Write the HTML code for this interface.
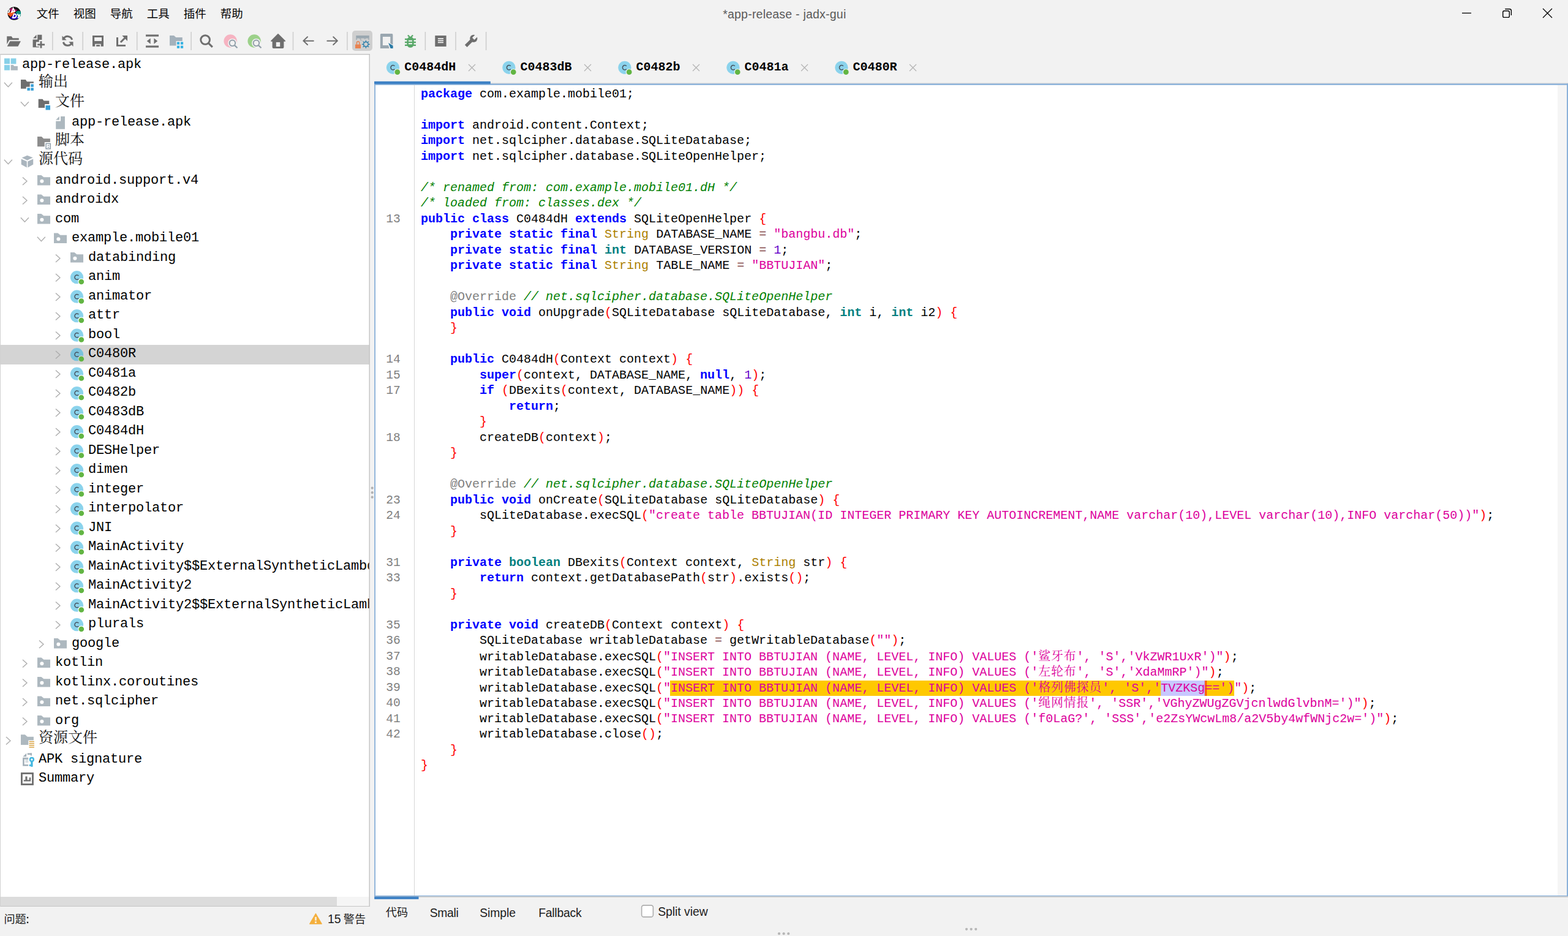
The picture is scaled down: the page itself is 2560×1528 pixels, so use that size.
<!DOCTYPE html>
<html><head><meta charset="utf-8"><title>jadx-gui</title><style>
html,body{margin:0;padding:0}
body{width:2560px;height:1528px;overflow:hidden;background:#f2f2f2;position:relative;font-family:"Liberation Sans",sans-serif}
.abs{position:absolute;white-space:pre}
.ui{font-family:"Liberation Sans",sans-serif}
.tr{font-family:"Liberation Mono",monospace;font-size:22px;line-height:31.5px;height:31.5px;color:#000;letter-spacing:-0.2px}
.tab{font-family:"Liberation Mono",monospace;font-weight:bold;font-size:20px;line-height:30px;color:#000}
.cl{font-family:"Liberation Mono",monospace;font-size:20px;line-height:25.5px;height:25.5px;color:#000}
.ln{font-family:"Liberation Mono",monospace;font-size:19.6px;line-height:25.5px;height:25.5px;color:#808080;text-align:right}
.kw{color:#0000ff}.dt{color:#008080}.fn{color:#ad8000}.nu{color:#6400c8}.sp{color:#ff0000}.op{color:#804040}.st{color:#dc009c}.an{color:#808080}
.cm{color:#008000;font-style:italic}
.bt{top:1480px;font-size:19.3px;color:#1c1c1c;line-height:22px}
.mn{font-family:"Liberation Sans","Noto Sans CJK SC",sans-serif;font-size:18.45px;line-height:18.6px;height:18.6px;color:#000}
.sb{font-family:"Liberation Sans","Noto Sans CJK SC",sans-serif;font-size:18.1px;line-height:18.6px;height:18.6px;color:#1c1c1c}
.tc{font-family:"Liberation Serif","Noto Serif CJK SC",serif;font-size:24px;line-height:24px;height:24px;color:#111}
.cj{font-family:"Liberation Serif","Noto Serif CJK SC",serif;font-size:19.9px;letter-spacing:0.9px;color:#dc009c}
#ov{position:absolute;left:0;top:0;pointer-events:none}
</style></head><body>
<div class="abs mn" style="left:59.8px;top:13.9px">文件</div>
<div class="abs mn" style="left:119.8px;top:13.9px">视图</div>
<div class="abs mn" style="left:179.8px;top:13.9px">导航</div>
<div class="abs mn" style="left:239.8px;top:13.9px">工具</div>
<div class="abs mn" style="left:299.8px;top:13.9px">插件</div>
<div class="abs mn" style="left:359.8px;top:13.9px">帮助</div>
<div class="abs ui" id="title" style="left:1180.2px;top:12px;font-size:19.4px;letter-spacing:0.27px;color:#5a5a5a;white-space:pre">*app-release - jadx-gui</div>
<div class="abs" style="left:0;top:88.5px;width:603.5px;height:1391.2px;background:#fff"></div>
<div class="abs" style="left:1px;top:563.00px;width:602px;height:32.00px;background:#d4d4d4"></div>
<div class="abs" style="left:1px;top:89px;width:602px;height:1374px;overflow:hidden"><div style="position:absolute;left:-1px;top:-89px"><div class="abs tr" style="left:35.90px;top:89.70px">app-release.apk</div><div class="abs tc" style="left:63.00px;top:121.40px">输出</div><div class="abs tc" style="left:90.00px;top:153.40px">文件</div><div class="abs tr" style="left:116.90px;top:183.70px">app-release.apk</div><div class="abs tc" style="left:90.00px;top:216.40px">脚本</div><div class="abs tc" style="left:63.00px;top:247.40px">源代码</div><div class="abs tr" style="left:89.90px;top:278.70px">android.support.v4</div><div class="abs tr" style="left:89.90px;top:309.70px">androidx</div><div class="abs tr" style="left:89.90px;top:341.70px">com</div><div class="abs tr" style="left:116.90px;top:372.70px">example.mobile01</div><div class="abs tr" style="left:143.90px;top:404.70px">databinding</div><div class="abs tr" style="left:143.90px;top:435.70px">anim</div><div class="abs tr" style="left:143.90px;top:467.70px">animator</div><div class="abs tr" style="left:143.90px;top:498.70px">attr</div><div class="abs tr" style="left:143.90px;top:530.70px">bool</div><div class="abs tr" style="left:143.90px;top:561.70px">C0480R</div><div class="abs tr" style="left:143.90px;top:593.70px">C0481a</div><div class="abs tr" style="left:143.90px;top:624.70px">C0482b</div><div class="abs tr" style="left:143.90px;top:656.70px">C0483dB</div><div class="abs tr" style="left:143.90px;top:687.70px">C0484dH</div><div class="abs tr" style="left:143.90px;top:719.70px">DESHelper</div><div class="abs tr" style="left:143.90px;top:750.70px">dimen</div><div class="abs tr" style="left:143.90px;top:782.70px">integer</div><div class="abs tr" style="left:143.90px;top:813.70px">interpolator</div><div class="abs tr" style="left:143.90px;top:845.70px">JNI</div><div class="abs tr" style="left:143.90px;top:876.70px">MainActivity</div><div class="abs tr" style="left:143.90px;top:908.70px">MainActivity$$ExternalSyntheticLambda0</div><div class="abs tr" style="left:143.90px;top:939.70px">MainActivity2</div><div class="abs tr" style="left:143.90px;top:971.70px">MainActivity2$$ExternalSyntheticLambda0</div><div class="abs tr" style="left:143.90px;top:1002.70px">plurals</div><div class="abs tr" style="left:116.90px;top:1034.70px">google</div><div class="abs tr" style="left:89.90px;top:1065.70px">kotlin</div><div class="abs tr" style="left:89.90px;top:1097.70px">kotlinx.coroutines</div><div class="abs tr" style="left:89.90px;top:1128.70px">net.sqlcipher</div><div class="abs tr" style="left:89.90px;top:1160.70px">org</div><div class="abs tc" style="left:63.00px;top:1192.40px">资源文件</div><div class="abs tr" style="left:62.90px;top:1223.70px">APK signature</div><div class="abs tr" style="left:62.90px;top:1254.70px">Summary</div></div></div>
<div class="abs" style="left:1px;top:1463.5px;width:601.6px;height:15.6px;background:#f5f5f5"></div>
<div class="abs" style="left:1px;top:1463.5px;width:549px;height:15.6px;background:#dcdcdc"></div>
<div class="abs sb" style="left:6.4px;top:1491.9px">问题</div>
<div class="abs ui" id="w15" style="left:535px;top:1489.2px;font-size:19.5px;color:#1c1c1c">15</div>
<div class="abs sb" style="left:560.8px;top:1491.9px">警告</div>
<div class="abs tab" style="left:660.20px;top:95px">C0484dH</div>
<div class="abs tab" style="left:849.60px;top:95px">C0483dB</div>
<div class="abs tab" style="left:1038.60px;top:95px">C0482b</div>
<div class="abs tab" style="left:1215.60px;top:95px">C0481a</div>
<div class="abs tab" style="left:1392.60px;top:95px">C0480R</div>
<div class="abs" style="left:611.7px;top:137.0px;width:1948.3px;height:1325.8px;background:#fff"></div>
<div class="abs" style="left:2543px;top:138.8px;width:15.1px;height:1322.8px;background:#f5f5f5"></div>
<div class="abs" style="left:676.1px;top:138.8px;width:1px;height:1323.1px;background:#d6d6d6"></div>
<div class="abs" style="left:1094.0px;top:1111.0px;width:921.0px;height:25.0px;background:#ffc800"></div>
<div class="abs" style="left:1895.0px;top:1111.0px;width:72.0px;height:25.0px;background:#c8c8ff"></div>
<div class="abs ln" style="left:612px;top:346.00px;width:41.8px">13</div>
<div class="abs ln" style="left:612px;top:575.00px;width:41.8px">14</div>
<div class="abs ln" style="left:612px;top:601.00px;width:41.8px">15</div>
<div class="abs ln" style="left:612px;top:626.00px;width:41.8px">17</div>
<div class="abs ln" style="left:612px;top:703.00px;width:41.8px">18</div>
<div class="abs ln" style="left:612px;top:805.00px;width:41.8px">23</div>
<div class="abs ln" style="left:612px;top:830.00px;width:41.8px">24</div>
<div class="abs ln" style="left:612px;top:907.00px;width:41.8px">31</div>
<div class="abs ln" style="left:612px;top:932.00px;width:41.8px">33</div>
<div class="abs ln" style="left:612px;top:1009.00px;width:41.8px">35</div>
<div class="abs ln" style="left:612px;top:1034.00px;width:41.8px">36</div>
<div class="abs ln" style="left:612px;top:1060.00px;width:41.8px">37</div>
<div class="abs ln" style="left:612px;top:1085.00px;width:41.8px">38</div>
<div class="abs ln" style="left:612px;top:1111.00px;width:41.8px">39</div>
<div class="abs ln" style="left:612px;top:1136.00px;width:41.8px">40</div>
<div class="abs ln" style="left:612px;top:1162.00px;width:41.8px">41</div>
<div class="abs ln" style="left:612px;top:1187.00px;width:41.8px">42</div>
<div class="abs cl" style="left:687.0px;top:141.00px"><b class="kw">package</b> com.example.mobile01;</div>
<div class="abs cl" style="left:687.0px;top:192.00px"><b class="kw">import</b> android.content.Context;</div>
<div class="abs cl" style="left:687.0px;top:217.00px"><b class="kw">import</b> net.sqlcipher.database.SQLiteDatabase;</div>
<div class="abs cl" style="left:687.0px;top:243.00px"><b class="kw">import</b> net.sqlcipher.database.SQLiteOpenHelper;</div>
<div class="abs cl" style="left:687.0px;top:294.00px"><i class="cm">/* renamed from: com.example.mobile01.dH */</i></div>
<div class="abs cl" style="left:687.0px;top:319.00px"><i class="cm">/* loaded from: classes.dex */</i></div>
<div class="abs cl" style="left:687.0px;top:345.00px"><b class="kw">public</b> <b class="kw">class</b> C0484dH <b class="kw">extends</b> SQLiteOpenHelper <span class="sp">{</span></div>
<div class="abs cl" style="left:687.0px;top:370.00px">    <b class="kw">private</b> <b class="kw">static</b> <b class="kw">final</b> <span class="fn">String</span> DATABASE_NAME <span class="op">=</span> <span class="st">"bangbu.db"</span>;</div>
<div class="abs cl" style="left:687.0px;top:396.00px">    <b class="kw">private</b> <b class="kw">static</b> <b class="kw">final</b> <b class="dt">int</b> DATABASE_VERSION <span class="op">=</span> <span class="nu">1</span>;</div>
<div class="abs cl" style="left:687.0px;top:421.00px">    <b class="kw">private</b> <b class="kw">static</b> <b class="kw">final</b> <span class="fn">String</span> TABLE_NAME <span class="op">=</span> <span class="st">"BBTUJIAN"</span>;</div>
<div class="abs cl" style="left:687.0px;top:472.00px">    <span class="an">@Override</span> <i class="cm">// net.sqlcipher.database.SQLiteOpenHelper</i></div>
<div class="abs cl" style="left:687.0px;top:498.00px">    <b class="kw">public</b> <b class="kw">void</b> onUpgrade<span class="sp">(</span>SQLiteDatabase sQLiteDatabase, <b class="dt">int</b> i, <b class="dt">int</b> i2<span class="sp">)</span> <span class="sp">{</span></div>
<div class="abs cl" style="left:687.0px;top:523.00px">    <span class="sp">}</span></div>
<div class="abs cl" style="left:687.0px;top:574.00px">    <b class="kw">public</b> C0484dH<span class="sp">(</span>Context context<span class="sp">)</span> <span class="sp">{</span></div>
<div class="abs cl" style="left:687.0px;top:600.00px">        <b class="kw">super</b><span class="sp">(</span>context, DATABASE_NAME, <b class="kw">null</b>, <span class="nu">1</span><span class="sp">)</span>;</div>
<div class="abs cl" style="left:687.0px;top:625.00px">        <b class="kw">if</b> <span class="sp">(</span>DBexits<span class="sp">(</span>context, DATABASE_NAME<span class="sp">)</span><span class="sp">)</span> <span class="sp">{</span></div>
<div class="abs cl" style="left:687.0px;top:651.00px">            <b class="kw">return</b>;</div>
<div class="abs cl" style="left:687.0px;top:676.00px">        <span class="sp">}</span></div>
<div class="abs cl" style="left:687.0px;top:702.00px">        createDB<span class="sp">(</span>context<span class="sp">)</span>;</div>
<div class="abs cl" style="left:687.0px;top:727.00px">    <span class="sp">}</span></div>
<div class="abs cl" style="left:687.0px;top:778.00px">    <span class="an">@Override</span> <i class="cm">// net.sqlcipher.database.SQLiteOpenHelper</i></div>
<div class="abs cl" style="left:687.0px;top:804.00px">    <b class="kw">public</b> <b class="kw">void</b> onCreate<span class="sp">(</span>SQLiteDatabase sQLiteDatabase<span class="sp">)</span> <span class="sp">{</span></div>
<div class="abs cl" style="left:687.0px;top:829.00px">        sQLiteDatabase.execSQL<span class="sp">(</span><span class="st">"create table BBTUJIAN(ID INTEGER PRIMARY KEY AUTOINCREMENT,NAME varchar(10),LEVEL varchar(10),INFO varchar(50))"</span><span class="sp">)</span>;</div>
<div class="abs cl" style="left:687.0px;top:855.00px">    <span class="sp">}</span></div>
<div class="abs cl" style="left:687.0px;top:906.00px">    <b class="kw">private</b> <b class="dt">boolean</b> DBexits<span class="sp">(</span>Context context, <span class="fn">String</span> str<span class="sp">)</span> <span class="sp">{</span></div>
<div class="abs cl" style="left:687.0px;top:931.00px">        <b class="kw">return</b> context.getDatabasePath<span class="sp">(</span>str<span class="sp">)</span>.exists<span class="sp">(</span><span class="sp">)</span>;</div>
<div class="abs cl" style="left:687.0px;top:957.00px">    <span class="sp">}</span></div>
<div class="abs cl" style="left:687.0px;top:1008.00px">    <b class="kw">private</b> <b class="kw">void</b> createDB<span class="sp">(</span>Context context<span class="sp">)</span> <span class="sp">{</span></div>
<div class="abs cl" style="left:687.0px;top:1033.00px">        SQLiteDatabase writableDatabase <span class="op">=</span> getWritableDatabase<span class="sp">(</span><span class="st">""</span><span class="sp">)</span>;</div>
<div class="abs cl" style="left:687.0px;top:1059.00px">        writableDatabase.execSQL<span class="sp">(</span><span class="st">"INSERT INTO BBTUJIAN (NAME, LEVEL, INFO) VALUES ('<span class="cj">鲨牙布</span>', 'S','VkZWR1UxR')"</span><span class="sp">)</span>;</div>
<div class="abs cl" style="left:687.0px;top:1084.00px">        writableDatabase.execSQL<span class="sp">(</span><span class="st">"INSERT INTO BBTUJIAN (NAME, LEVEL, INFO) VALUES ('<span class="cj">左轮布</span>', 'S','XdaMmRP')"</span><span class="sp">)</span>;</div>
<div class="abs cl" style="left:687.0px;top:1110.00px">        writableDatabase.execSQL<span class="sp">(</span><span class="st">"INSERT INTO BBTUJIAN (NAME, LEVEL, INFO) VALUES ('<span class="cj">格列佛探员</span>', 'S','TVZKSg==')"</span><span class="sp">)</span>;</div>
<div class="abs cl" style="left:687.0px;top:1135.00px">        writableDatabase.execSQL<span class="sp">(</span><span class="st">"INSERT INTO BBTUJIAN (NAME, LEVEL, INFO) VALUES ('<span class="cj">绳网情报</span>', 'SSR','VGhyZWUgZGVjcnlwdGlvbnM=')"</span><span class="sp">)</span>;</div>
<div class="abs cl" style="left:687.0px;top:1161.00px">        writableDatabase.execSQL<span class="sp">(</span><span class="st">"INSERT INTO BBTUJIAN (NAME, LEVEL, INFO) VALUES ('f0LaG?', 'SSS','e2ZsYWcwLm8/a2V5by4wfWNjc2w=')"</span><span class="sp">)</span>;</div>
<div class="abs cl" style="left:687.0px;top:1186.00px">        writableDatabase.close<span class="sp">(</span><span class="sp">)</span>;</div>
<div class="abs cl" style="left:687.0px;top:1212.00px">    <span class="sp">}</span></div>
<div class="abs cl" style="left:687.0px;top:1237.00px"><span class="sp">}</span></div>
<div class="abs sb" style="left:629.8px;top:1481.3px">代码</div>
<div class="abs ui bt" id="bt1" style="left:701.8px;letter-spacing:-0.3px">Smali</div>
<div class="abs ui bt" id="bt2" style="left:783.2px;letter-spacing:-0.05px">Simple</div>
<div class="abs ui bt" id="bt3" style="left:879.2px;letter-spacing:-0.2px">Fallback</div>
<div class="abs ui bt" id="bt4" style="left:1074.2px;top:1478.2px;letter-spacing:0.0px">Split view</div>
<svg id="ov" width="2560" height="1528" viewBox="0 0 2560 1528"><clipPath id="lgc"><circle cx="23.2" cy="21.95" r="11.05"/></clipPath><g clip-path="url(#lgc)"><circle cx="23.2" cy="21.95" r="10.9" fill="#141414"/><path fill="#b3126c" d="M16.6,13.7L19.5,13.0L28.3,16.6L25.6,18.6L17.6,19.5L16.1,17.6Z"/><path fill="#f4561f" d="M12.1,22.0L17.6,19.5L25.6,18.6L17.6,27.7L13.7,24.6Z"/><path fill="#2b00cc" d="M16.1,30.3L24.5,20.9L26.9,22.4L29.8,30.3L23.4,31.4Z"/><path fill="#008c7c" d="M25.5,19.5L28.3,18.1L30.9,17.8L34.0,18.8L34.2,25.8L29.8,30.2L26.9,22.4Z"/><path fill="none" stroke="#fff" stroke-width="1.9" d="M15.3,15.4L15.0,19.5L12.5,20.7"/><path fill="none" stroke="#fff" stroke-width="1.9" d="M18.6,21.0L21.6,13.7L24.4,19.5M19.5,19.5L23.9,18.6"/><path fill="none" stroke="#fff" stroke-width="1.9" stroke-linejoin="round" d="M22.7,22.7L20.7,29.0L23.9,29.0Q26.6,28.3 26.6,25.6Q26.6,22.7 22.7,22.7Z"/><path fill="none" stroke="#fff" stroke-width="2.0" d="M28.3,22.7L32.5,28.3M32.9,23.2L29.2,29.7"/></g>
<path stroke="#000" stroke-width="1.3" fill="none" d="M2387,21.4H2402"/>
<rect x="2453.7" y="17.8" width="10.6" height="10.6" rx="2.2" fill="none" stroke="#000" stroke-width="1.4"/>
<path fill="none" stroke="#000" stroke-width="1.4" d="M2457.2,14.7H2464.6Q2467.4,14.7 2467.4,17.5V25"/>
<path stroke="#000" stroke-width="1.3" fill="none" d="M2519,14L2534,29M2534,14L2519,29"/>
<rect x="85.05" y="52" width="1.5" height="30" fill="#cdcdcd"/>
<rect x="134.45" y="52" width="1.5" height="30" fill="#cdcdcd"/>
<rect x="222.95" y="52" width="1.5" height="30" fill="#cdcdcd"/>
<rect x="311.35" y="52" width="1.5" height="30" fill="#cdcdcd"/>
<rect x="477.75" y="52" width="1.5" height="30" fill="#cdcdcd"/>
<rect x="566.15" y="52" width="1.5" height="30" fill="#cdcdcd"/>
<rect x="693.65" y="52" width="1.5" height="30" fill="#cdcdcd"/>
<rect x="743.25" y="52" width="1.5" height="30" fill="#cdcdcd"/>
<rect x="792.85" y="52" width="1.5" height="30" fill="#cdcdcd"/>
<rect x="575" y="50" width="33" height="33" rx="5" fill="#cfcfcf"/>
<g transform="translate(10.50 54.50) scale(1.500)"><path fill="#6e6e6e" d="M0.5,3.2H5.5L6.8,5.2H13.5V7.1H3.1L0.5,11.8Z"/><path fill="#6e6e6e" d="M3.9,8.5H15.6L12.6,14.2H0.8Z"/></g>
<g transform="translate(49.50 54.50) scale(1.500)"><path fill="#6e6e6e" d="M3,5.3H6.7V1.5Z"/><path fill="#6e6e6e" d="M7.8,1.5H12.6V7H9.5V9.3H6.3V14.3H9.5V15.1H2.7V6.6H7.8Z"/><path fill="#6e6e6e" d="M10.7,8.5H12.6V11.4H15.7V13.2H12.6V16H10.7V13.2H7.8V11.4H10.7Z"/></g>
<g transform="translate(98.50 54.50) scale(1.500)"><path fill="none" stroke="#6e6e6e" stroke-width="2" d="M3.6,6.0A4.9,4.9 0 0 1 12.75,6.9"/><path fill="none" stroke="#6e6e6e" stroke-width="2" d="M12.4,10.4A4.9,4.9 0 0 1 3.25,9.5"/><path fill="#6e6e6e" d="M2,2.6V7.4H6.8Z"/><path fill="#6e6e6e" d="M9.2,9.2H14V14.3Z"/></g>
<g transform="translate(148.00 54.50) scale(1.500)"><path fill="#6e6e6e" fill-rule="evenodd" d="M2,2.3H14V14.2H11.1V11.5H4.8V14.2H2Z M4.1,4.4V8.3H12V4.4Z"/><rect fill="#6e6e6e" x="6.1" y="12.4" width="3.9" height="1.8"/></g>
<g transform="translate(187.00 54.50) scale(1.500)"><path fill="#6e6e6e" d="M2,4.4H4V12.3H12V14.2H2Z"/><path fill="#6e6e6e" d="M8.2,2.3H14V8.3Z"/><path stroke="#6e6e6e" stroke-width="2" d="M6.6,9.7L12,4.3"/></g>
<g transform="translate(236.40 54.50) scale(1.500)"><rect fill="#6e6e6e" x="1.1" y="1.3" width="14" height="2.1"/><rect fill="#6e6e6e" x="1.1" y="13.3" width="14" height="2.1"/><path fill="#6e6e6e" d="M2.2,8.4L6.2,5.3V11.5Z"/><path fill="#6e6e6e" d="M13.9,8.4L10,5.3V11.5Z"/></g>
<g transform="translate(275.40 54.50) scale(1.500)"><path fill="#a4b1bb" d="M1.1,2.4H5.7L7.9,4.4H14.9V8.4H8.1V13.3H1.1Z"/><rect fill="#35b1e2" x="9.0" y="9.3" width="2.8" height="2.8"/><rect fill="#35b1e2" x="9.0" y="13.4" width="2.8" height="2.8"/><rect fill="#35b1e2" x="13.0" y="9.3" width="2.8" height="2.8"/><rect fill="#35b1e2" x="13.0" y="13.4" width="2.8" height="2.8"/></g>
<g transform="translate(324.80 54.50) scale(1.500)"><circle cx="6.87" cy="7.03" r="4.9" fill="none" stroke="#6e6e6e" stroke-width="1.95"/><path stroke="#6e6e6e" stroke-width="2.1" d="M10.2,10.4L14.7,14.9"/></g>
<circle cx="376.15" cy="67.00" r="10.75" fill="#f6b3c1"/><circle cx="379.40" cy="70.35" r="7.4" fill="#f2f2f2"/><path stroke="#f2f2f2" stroke-width="4.6" stroke-linecap="round" d="M382.40,73.35L387.00,77.75"/><circle cx="379.40" cy="70.35" r="4.77" fill="none" stroke="#929fa9" stroke-width="1.97"/><path stroke="#929fa9" stroke-width="2.25" d="M382.90,73.85L387.50,78.25"/>
<circle cx="415.15" cy="67.00" r="10.75" fill="#9cd18a"/><circle cx="418.40" cy="70.35" r="7.4" fill="#f2f2f2"/><path stroke="#f2f2f2" stroke-width="4.6" stroke-linecap="round" d="M421.40,73.35L426.00,77.75"/><circle cx="418.40" cy="70.35" r="4.77" fill="none" stroke="#929fa9" stroke-width="1.97"/><path stroke="#929fa9" stroke-width="2.25" d="M421.90,73.85L426.50,78.25"/>
<path fill="#6e6e6e" stroke="#6e6e6e" stroke-width="1.6" stroke-linejoin="round" d="M454.00,55.80L442.80,67.00L465.40,67.00Z"/><path fill="#6e6e6e" d="M444.60,65.50H463.40V76.90Q463.40,78.90 461.40,78.90H446.60Q444.60,78.90 444.60,76.90Z"/><rect fill="#f2f2f2" x="450.80" y="68.90" width="6.4" height="7.2"/>
<path fill="none" stroke="#6e6e6e" stroke-width="1.95" stroke-linecap="round" stroke-linejoin="round" d="M511.80,66.66H495.30M502.00,60.26L495.30,66.66L502.00,73.06"/>
<path fill="none" stroke="#6e6e6e" stroke-width="1.95" stroke-linecap="round" stroke-linejoin="round" d="M534.30,66.66H550.90M544.20,60.26L550.90,66.66L544.20,73.06"/>
<rect x="581.33" y="58" width="21.43" height="4.3" fill="#9aa7b0"/><rect x="581.33" y="62.3" width="1.5" height="2.6" fill="#9aa7b0"/><rect x="601.26" y="62.3" width="1.5" height="2.6" fill="#9aa7b0"/><rect x="582.8" y="62.3" width="18.5" height="0.7" fill="#9aa7b0" opacity="0.5"/><rect x="586.95" y="62.3" width="2.65" height="1.4" fill="#9aa7b0" opacity="0.85"/><rect x="588.2" y="63.7" width="1.05" height="2.5" fill="#9aa7b0" opacity="0.9"/><rect x="589.25" y="65.2" width="2.1" height="1.05" fill="#9aa7b0" opacity="0.7"/><rect x="594.6" y="62.3" width="2.3" height="1.5" fill="#9aa7b0" opacity="0.85"/><rect x="580" y="72.55" width="9" height="6.45" fill="#e98250"/><path fill="none" stroke="#e98250" stroke-width="1.5" d="M582.45,72.8V69.9A2.15,2.15 0 0 1 586.75,69.9V72.8"/><circle cx="597.37" cy="72.34" r="3.75" fill="none" stroke="#2a7fab" stroke-width="1.45"/><path fill="#2a7fab" d="M601.57,73.34L604.07,72.69L604.07,71.99L601.57,71.34Z"/><path fill="#2a7fab" d="M599.63,76.02L601.86,77.33L602.36,76.83L601.05,74.60Z"/><path fill="#2a7fab" d="M596.37,76.54L597.02,79.04L597.72,79.04L598.37,76.54Z"/><path fill="#2a7fab" d="M593.69,74.60L592.38,76.83L592.88,77.33L595.11,76.02Z"/><path fill="#2a7fab" d="M593.17,71.34L590.67,71.99L590.67,72.69L593.17,73.34Z"/><path fill="#2a7fab" d="M595.11,68.66L592.88,67.35L592.38,67.85L593.69,70.08Z"/><path fill="#2a7fab" d="M598.37,68.14L597.72,65.64L597.02,65.64L596.37,68.14Z"/><path fill="#2a7fab" d="M601.05,70.08L602.36,67.85L601.86,67.35L599.63,68.66Z"/>
<path fill="#9aa7b0" fill-rule="evenodd" d="M622.4,55.1H639.8Q641.35,55.1 641.35,56.6V78.95H620.85V56.6Q620.85,55.1 622.4,55.1Z M624.9,59.9V74.1H637.3V59.9Z"/><path fill="#f2f2f2" d="M632.4,68.3L642,73.2V80H635.9Z"/><path fill="#2b7ba6" d="M634.1,69.9L641.6,74.4V78.95H637.6Z"/>
<path fill="#59a869" d="M664.43,65.7A5.61,5.61 0 0 1 675.65,65.7V72.23A5.61,5.61 0 0 1 664.43,72.23Z"/><path stroke="#59a869" stroke-width="2.3" d="M665.9,57.5L669.6,61.2M674.1,57.5L670.4,61.2"/><rect x="661" y="62.83" width="17.98" height="2.4" fill="#59a869"/><rect x="661" y="67.80" width="17.98" height="2.4" fill="#59a869"/><rect x="661" y="72.63" width="17.98" height="2.4" fill="#59a869"/><rect x="666.95" y="65.8" width="5.95" height="1.95" fill="#f6f6f6"/><rect x="666.95" y="70.28" width="5.95" height="1.95" fill="#f6f6f6"/>
<rect x="710.3" y="58.05" width="18.3" height="17.9" fill="#6e6e6e"/><rect x="714.9" y="62.30" width="9.1" height="1.7" fill="#f5f5f5"/><rect x="714.9" y="65.45" width="9.1" height="1.7" fill="#f5f5f5"/><rect x="714.9" y="68.50" width="9.1" height="1.7" fill="#f5f5f5"/>
<path fill="#6e6e6e" d="M758.87,73.37L762.54,77.04L773.0,66.6L769.3,62.9Z"/><circle cx="773.30" cy="62.83" r="6.1" fill="#6e6e6e"/><path fill="#f2f2f2" d="M771.0,61.46L774.46,64.9L781.5,57.9L778,54.4Z"/>
<rect x="0" y="88.05" width="603.9" height="1.4" fill="#c2c2c2"/>
<rect x="0" y="1479.0" width="603.9" height="0.95" fill="#c2c2c2"/>
<rect x="0" y="88.05" width="1.0" height="1391.9" fill="#d0d0d0"/>
<rect x="602.5" y="88.05" width="1.4" height="1391.9" fill="#c2c2c2"/>
<rect x="7.00" y="95.30" width="9" height="9.1" fill="#87d0e8"/><rect x="17.60" y="95.30" width="8.8" height="9.1" fill="#87d0e8"/><rect x="7.00" y="106.10" width="9" height="8.6" fill="#87d0e8"/><path fill="#adb8bf" d="M17.60,106.10H21.50L23.20,108.00H28.90V114.70H17.60Z"/>
<path fill="none" stroke="#adadad" stroke-width="1.4" d="M6.90,134.85L13.40,141.65L19.90,134.85"/>
<path fill="#6e6e6e" d="M34.00,130.10H41.90L44.00,133.20H54.90V135.75H48.75V141.65H42.70V144.70H34.00Z"/><rect x="50.30" y="137.40" width="4.55" height="4.5" fill="#389fd6"/><rect x="44.40" y="143.35" width="4.55" height="4.5" fill="#389fd6"/><rect x="50.30" y="143.35" width="4.55" height="4.5" fill="#389fd6"/>
<path fill="none" stroke="#adadad" stroke-width="1.4" d="M33.90,166.35L40.40,173.15L46.90,166.35"/>
<path fill="#6e6e6e" d="M62.70,161.70H69.50L71.60,164.60H80.30V170.10H73.10V175.90H62.70Z"/><rect x="74.50" y="172.00" width="7.5" height="7.5" fill="#389fd6"/>
<path fill="#adb8bf" d="M91.20,195.70H96.85V190.05Z"/><path fill="#adb8bf" d="M99.05,190.05H105.95V210.85H91.20V197.70H99.05Z"/>
<path fill="#8c8c8c" d="M61.05,223.00H67.95L71.15,226.25H81.90V231.90H72.80V239.35H61.05Z"/><rect x="75.10" y="234.40" width="7.1" height="8.5" fill="#fff" stroke="#8797a4" stroke-width="1.4"/><rect x="77.60" y="236.75" width="2.7" height="1.2" fill="#8797a4"/><rect x="77.60" y="239.80" width="2.7" height="1.2" fill="#8797a4"/>
<path fill="none" stroke="#adadad" stroke-width="1.4" d="M6.90,260.85L13.40,267.65L19.90,260.85"/>
<path fill="#aab5be" d="M44.50,253.80L53.60,257.20L44.50,261.70L35.70,257.40Z"/><path fill="#aab5be" d="M34.70,259.40L43.80,263.60L43.80,273.40L34.70,268.60Z"/><path fill="#aab5be" d="M45.30,263.60L54.20,259.40L54.20,268.60L45.30,273.40Z"/>
<path fill="none" stroke="#adadad" stroke-width="1.4" d="M36.95,289.45L43.95,295.75L36.95,302.05"/>
<path fill="#adb8bf" d="M61.00,286.05H67.40L71.40,289.25H82.00V302.55H61.00Z"/><circle cx="68.40" cy="295.80" r="3.0" fill="#fff"/>
<path fill="none" stroke="#adadad" stroke-width="1.4" d="M36.95,320.95L43.95,327.25L36.95,333.55"/>
<path fill="#adb8bf" d="M61.00,317.55H67.40L71.40,320.75H82.00V334.05H61.00Z"/><circle cx="68.40" cy="327.30" r="3.0" fill="#fff"/>
<path fill="none" stroke="#adadad" stroke-width="1.4" d="M33.90,355.35L40.40,362.15L46.90,355.35"/>
<path fill="#adb8bf" d="M61.00,349.05H67.40L71.40,352.25H82.00V365.55H61.00Z"/><circle cx="68.40" cy="358.80" r="3.0" fill="#fff"/>
<path fill="none" stroke="#adadad" stroke-width="1.4" d="M60.90,386.85L67.40,393.65L73.90,386.85"/>
<path fill="#adb8bf" d="M88.00,380.55H94.40L98.40,383.75H109.00V397.05H88.00Z"/><circle cx="95.40" cy="390.30" r="3.0" fill="#fff"/>
<path fill="none" stroke="#adadad" stroke-width="1.4" d="M90.95,415.45L97.95,421.75L90.95,428.05"/>
<path fill="#adb8bf" d="M115.00,412.05H121.40L125.40,415.25H136.00V428.55H115.00Z"/><circle cx="122.40" cy="421.80" r="3.0" fill="#fff"/>
<path fill="none" stroke="#adadad" stroke-width="1.4" d="M90.95,446.95L97.95,453.25L90.95,459.55"/>
<circle cx="125.50" cy="452.65" r="10.6" fill="#8bd3ec"/><path fill="none" stroke="#47545f" stroke-width="1.5" d="M128.41,450.13A3.70,3.70 0 1 0 128.41,455.17"/><circle cx="132.80" cy="460.00" r="5.5" fill="#fff"/><circle cx="132.80" cy="460.00" r="4.35" fill="#62b543"/>
<path fill="none" stroke="#adadad" stroke-width="1.4" d="M90.95,478.45L97.95,484.75L90.95,491.05"/>
<circle cx="125.50" cy="484.15" r="10.6" fill="#8bd3ec"/><path fill="none" stroke="#47545f" stroke-width="1.5" d="M128.41,481.63A3.70,3.70 0 1 0 128.41,486.67"/><circle cx="132.80" cy="491.50" r="5.5" fill="#fff"/><circle cx="132.80" cy="491.50" r="4.35" fill="#62b543"/>
<path fill="none" stroke="#adadad" stroke-width="1.4" d="M90.95,509.95L97.95,516.25L90.95,522.55"/>
<circle cx="125.50" cy="515.65" r="10.6" fill="#8bd3ec"/><path fill="none" stroke="#47545f" stroke-width="1.5" d="M128.41,513.13A3.70,3.70 0 1 0 128.41,518.17"/><circle cx="132.80" cy="523.00" r="5.5" fill="#fff"/><circle cx="132.80" cy="523.00" r="4.35" fill="#62b543"/>
<path fill="none" stroke="#adadad" stroke-width="1.4" d="M90.95,541.45L97.95,547.75L90.95,554.05"/>
<circle cx="125.50" cy="547.15" r="10.6" fill="#8bd3ec"/><path fill="none" stroke="#47545f" stroke-width="1.5" d="M128.41,544.63A3.70,3.70 0 1 0 128.41,549.67"/><circle cx="132.80" cy="554.50" r="5.5" fill="#fff"/><circle cx="132.80" cy="554.50" r="4.35" fill="#62b543"/>
<path fill="none" stroke="#adadad" stroke-width="1.4" d="M90.95,572.95L97.95,579.25L90.95,585.55"/>
<circle cx="125.50" cy="578.65" r="10.6" fill="#79c2dc"/><path fill="none" stroke="#47545f" stroke-width="1.5" d="M128.41,576.13A3.70,3.70 0 1 0 128.41,581.17"/><circle cx="132.80" cy="586.00" r="5.5" fill="#d4d4d4"/><circle cx="132.80" cy="586.00" r="4.35" fill="#62b543"/>
<path fill="none" stroke="#adadad" stroke-width="1.4" d="M90.95,604.45L97.95,610.75L90.95,617.05"/>
<circle cx="125.50" cy="610.15" r="10.6" fill="#8bd3ec"/><path fill="none" stroke="#47545f" stroke-width="1.5" d="M128.41,607.63A3.70,3.70 0 1 0 128.41,612.67"/><circle cx="132.80" cy="617.50" r="5.5" fill="#fff"/><circle cx="132.80" cy="617.50" r="4.35" fill="#62b543"/>
<path fill="none" stroke="#adadad" stroke-width="1.4" d="M90.95,635.95L97.95,642.25L90.95,648.55"/>
<circle cx="125.50" cy="641.65" r="10.6" fill="#8bd3ec"/><path fill="none" stroke="#47545f" stroke-width="1.5" d="M128.41,639.13A3.70,3.70 0 1 0 128.41,644.17"/><circle cx="132.80" cy="649.00" r="5.5" fill="#fff"/><circle cx="132.80" cy="649.00" r="4.35" fill="#62b543"/>
<path fill="none" stroke="#adadad" stroke-width="1.4" d="M90.95,667.45L97.95,673.75L90.95,680.05"/>
<circle cx="125.50" cy="673.15" r="10.6" fill="#8bd3ec"/><path fill="none" stroke="#47545f" stroke-width="1.5" d="M128.41,670.63A3.70,3.70 0 1 0 128.41,675.67"/><circle cx="132.80" cy="680.50" r="5.5" fill="#fff"/><circle cx="132.80" cy="680.50" r="4.35" fill="#62b543"/>
<path fill="none" stroke="#adadad" stroke-width="1.4" d="M90.95,698.95L97.95,705.25L90.95,711.55"/>
<circle cx="125.50" cy="704.65" r="10.6" fill="#8bd3ec"/><path fill="none" stroke="#47545f" stroke-width="1.5" d="M128.41,702.13A3.70,3.70 0 1 0 128.41,707.17"/><circle cx="132.80" cy="712.00" r="5.5" fill="#fff"/><circle cx="132.80" cy="712.00" r="4.35" fill="#62b543"/>
<path fill="none" stroke="#adadad" stroke-width="1.4" d="M90.95,730.45L97.95,736.75L90.95,743.05"/>
<circle cx="125.50" cy="736.15" r="10.6" fill="#8bd3ec"/><path fill="none" stroke="#47545f" stroke-width="1.5" d="M128.41,733.63A3.70,3.70 0 1 0 128.41,738.67"/><circle cx="132.80" cy="743.50" r="5.5" fill="#fff"/><circle cx="132.80" cy="743.50" r="4.35" fill="#62b543"/>
<path fill="none" stroke="#adadad" stroke-width="1.4" d="M90.95,761.95L97.95,768.25L90.95,774.55"/>
<circle cx="125.50" cy="767.65" r="10.6" fill="#8bd3ec"/><path fill="none" stroke="#47545f" stroke-width="1.5" d="M128.41,765.13A3.70,3.70 0 1 0 128.41,770.17"/><circle cx="132.80" cy="775.00" r="5.5" fill="#fff"/><circle cx="132.80" cy="775.00" r="4.35" fill="#62b543"/>
<path fill="none" stroke="#adadad" stroke-width="1.4" d="M90.95,793.45L97.95,799.75L90.95,806.05"/>
<circle cx="125.50" cy="799.15" r="10.6" fill="#8bd3ec"/><path fill="none" stroke="#47545f" stroke-width="1.5" d="M128.41,796.63A3.70,3.70 0 1 0 128.41,801.67"/><circle cx="132.80" cy="806.50" r="5.5" fill="#fff"/><circle cx="132.80" cy="806.50" r="4.35" fill="#62b543"/>
<path fill="none" stroke="#adadad" stroke-width="1.4" d="M90.95,824.95L97.95,831.25L90.95,837.55"/>
<circle cx="125.50" cy="830.65" r="10.6" fill="#8bd3ec"/><path fill="none" stroke="#47545f" stroke-width="1.5" d="M128.41,828.13A3.70,3.70 0 1 0 128.41,833.17"/><circle cx="132.80" cy="838.00" r="5.5" fill="#fff"/><circle cx="132.80" cy="838.00" r="4.35" fill="#62b543"/>
<path fill="none" stroke="#adadad" stroke-width="1.4" d="M90.95,856.45L97.95,862.75L90.95,869.05"/>
<circle cx="125.50" cy="862.15" r="10.6" fill="#8bd3ec"/><path fill="none" stroke="#47545f" stroke-width="1.5" d="M128.41,859.63A3.70,3.70 0 1 0 128.41,864.67"/><circle cx="132.80" cy="869.50" r="5.5" fill="#fff"/><circle cx="132.80" cy="869.50" r="4.35" fill="#62b543"/>
<path fill="none" stroke="#adadad" stroke-width="1.4" d="M90.95,887.95L97.95,894.25L90.95,900.55"/>
<circle cx="125.50" cy="893.65" r="10.6" fill="#8bd3ec"/><path fill="none" stroke="#47545f" stroke-width="1.5" d="M128.41,891.13A3.70,3.70 0 1 0 128.41,896.17"/><circle cx="132.80" cy="901.00" r="5.5" fill="#fff"/><circle cx="132.80" cy="901.00" r="4.35" fill="#62b543"/>
<path fill="none" stroke="#adadad" stroke-width="1.4" d="M90.95,919.45L97.95,925.75L90.95,932.05"/>
<circle cx="125.50" cy="925.15" r="10.6" fill="#8bd3ec"/><path fill="none" stroke="#47545f" stroke-width="1.5" d="M128.41,922.63A3.70,3.70 0 1 0 128.41,927.67"/><circle cx="132.80" cy="932.50" r="5.5" fill="#fff"/><circle cx="132.80" cy="932.50" r="4.35" fill="#62b543"/>
<path fill="none" stroke="#adadad" stroke-width="1.4" d="M90.95,950.95L97.95,957.25L90.95,963.55"/>
<circle cx="125.50" cy="956.65" r="10.6" fill="#8bd3ec"/><path fill="none" stroke="#47545f" stroke-width="1.5" d="M128.41,954.13A3.70,3.70 0 1 0 128.41,959.17"/><circle cx="132.80" cy="964.00" r="5.5" fill="#fff"/><circle cx="132.80" cy="964.00" r="4.35" fill="#62b543"/>
<path fill="none" stroke="#adadad" stroke-width="1.4" d="M90.95,982.45L97.95,988.75L90.95,995.05"/>
<circle cx="125.50" cy="988.15" r="10.6" fill="#8bd3ec"/><path fill="none" stroke="#47545f" stroke-width="1.5" d="M128.41,985.63A3.70,3.70 0 1 0 128.41,990.67"/><circle cx="132.80" cy="995.50" r="5.5" fill="#fff"/><circle cx="132.80" cy="995.50" r="4.35" fill="#62b543"/>
<path fill="none" stroke="#adadad" stroke-width="1.4" d="M90.95,1013.95L97.95,1020.25L90.95,1026.55"/>
<circle cx="125.50" cy="1019.65" r="10.6" fill="#8bd3ec"/><path fill="none" stroke="#47545f" stroke-width="1.5" d="M128.41,1017.13A3.70,3.70 0 1 0 128.41,1022.17"/><circle cx="132.80" cy="1027.00" r="5.5" fill="#fff"/><circle cx="132.80" cy="1027.00" r="4.35" fill="#62b543"/>
<path fill="none" stroke="#adadad" stroke-width="1.4" d="M63.95,1045.45L70.95,1051.75L63.95,1058.05"/>
<path fill="#adb8bf" d="M88.00,1042.05H94.40L98.40,1045.25H109.00V1058.55H88.00Z"/><circle cx="95.40" cy="1051.80" r="3.0" fill="#fff"/>
<path fill="none" stroke="#adadad" stroke-width="1.4" d="M36.95,1076.95L43.95,1083.25L36.95,1089.55"/>
<path fill="#adb8bf" d="M61.00,1073.55H67.40L71.40,1076.75H82.00V1090.05H61.00Z"/><circle cx="68.40" cy="1083.30" r="3.0" fill="#fff"/>
<path fill="none" stroke="#adadad" stroke-width="1.4" d="M36.95,1108.45L43.95,1114.75L36.95,1121.05"/>
<path fill="#adb8bf" d="M61.00,1105.05H67.40L71.40,1108.25H82.00V1121.55H61.00Z"/><circle cx="68.40" cy="1114.80" r="3.0" fill="#fff"/>
<path fill="none" stroke="#adadad" stroke-width="1.4" d="M36.95,1139.95L43.95,1146.25L36.95,1152.55"/>
<path fill="#adb8bf" d="M61.00,1136.55H67.40L71.40,1139.75H82.00V1153.05H61.00Z"/><circle cx="68.40" cy="1146.30" r="3.0" fill="#fff"/>
<path fill="none" stroke="#adadad" stroke-width="1.4" d="M36.95,1171.45L43.95,1177.75L36.95,1184.05"/>
<path fill="#adb8bf" d="M61.00,1168.05H67.40L71.40,1171.25H82.00V1184.55H61.00Z"/><circle cx="68.40" cy="1177.80" r="3.0" fill="#fff"/>
<path fill="none" stroke="#adadad" stroke-width="1.4" d="M9.95,1202.95L16.95,1209.25L9.95,1215.55"/>
<path fill="#adb8bf" d="M34.00,1199.30H40.80L44.80,1202.65H54.90V1215.90H34.00Z"/><rect x="46.30" y="1208.50" width="11" height="13" fill="#fff"/><rect x="47.50" y="1209.90" width="8.4" height="1.5" fill="#d9a343"/><rect x="47.50" y="1212.93" width="8.4" height="1.5" fill="#d9a343"/><rect x="47.50" y="1215.96" width="8.4" height="1.5" fill="#d9a343"/><rect x="47.50" y="1218.99" width="8.4" height="1.5" fill="#d9a343"/>
<path fill="#a3b0b9" d="M37.40,1235.20H43.10V1229.80Z"/><rect x="44.80" y="1229.50" width="7.1" height="2.6" fill="#a3b0b9"/><rect x="49.90" y="1229.50" width="2.0" height="4" fill="#a3b0b9"/><path fill="none" stroke="#a3b0b9" stroke-width="2.6" d="M46.20,1238.10H38.40V1249.30H46.20"/><rect x="41.40" y="1240.30" width="4.8" height="1.3" fill="#a3b0b9" opacity="0.8"/><rect x="41.40" y="1243.00" width="4.8" height="1.3" fill="#a3b0b9" opacity="0.8"/><circle cx="51.90" cy="1239.90" r="5.0" fill="#fff"/><rect x="47.00" y="1243.00" width="7.5" height="9.5" fill="#fff"/><circle cx="51.90" cy="1239.90" r="2.9" fill="none" stroke="#40b6e0" stroke-width="2.4"/><rect x="50.25" y="1243.50" width="3.3" height="8.2" fill="#40b6e0"/><rect x="47.80" y="1248.00" width="2.6" height="2.7" fill="#40b6e0"/>
<rect x="35.43" y="1262.50" width="18.07" height="18.0" fill="#fff" stroke="#6e6e6e" stroke-width="2.8"/><path fill="#6e6e6e" d="M38.70,1275.60H50.20V1269.20H47.80V1273.30H44.50V1267.50H41.40V1273.30H38.70Z"/>
<circle cx="607.7" cy="796.7" r="2.1" fill="#b2b2b2"/>
<circle cx="607.7" cy="804.2" r="2.1" fill="#b2b2b2"/>
<circle cx="607.7" cy="811.7" r="2.1" fill="#b2b2b2"/>
<rect x="43.9" y="1496.8" width="2.3" height="2.3" fill="#1c1c1c"/><rect x="43.9" y="1504.75" width="2.3" height="2.3" fill="#1c1c1c"/>
<path fill="#f4af3d" stroke="#f4af3d" stroke-width="1.2" stroke-linejoin="round" d="M515.47,1491.5L525.3,1508.2H505.6Z"/>
<rect x="514.0" y="1496.9" width="2.9" height="5.9" fill="#fbebcd"/><rect x="514.0" y="1504.2" width="2.9" height="2.8" fill="#fbebcd"/>
<circle cx="641.50" cy="110.30" r="10.6" fill="#8bd3ec"/><path fill="none" stroke="#47545f" stroke-width="1.5" d="M644.41,107.78A3.70,3.70 0 1 0 644.41,112.82"/><circle cx="648.80" cy="117.65" r="5.5" fill="#f2f2f2"/><circle cx="648.80" cy="117.65" r="4.35" fill="#62b543"/>
<path stroke="#b4b4b4" stroke-width="1.3" d="M765.00,105L776.00,116M776.00,105L765.00,116"/>
<circle cx="830.90" cy="110.30" r="10.6" fill="#8bd3ec"/><path fill="none" stroke="#47545f" stroke-width="1.5" d="M833.81,107.78A3.70,3.70 0 1 0 833.81,112.82"/><circle cx="838.20" cy="117.65" r="5.5" fill="#f2f2f2"/><circle cx="838.20" cy="117.65" r="4.35" fill="#62b543"/>
<path stroke="#b4b4b4" stroke-width="1.3" d="M954.00,105L965.00,116M965.00,105L954.00,116"/>
<circle cx="1019.90" cy="110.30" r="10.6" fill="#8bd3ec"/><path fill="none" stroke="#47545f" stroke-width="1.5" d="M1022.81,107.78A3.70,3.70 0 1 0 1022.81,112.82"/><circle cx="1027.20" cy="117.65" r="5.5" fill="#f2f2f2"/><circle cx="1027.20" cy="117.65" r="4.35" fill="#62b543"/>
<path stroke="#b4b4b4" stroke-width="1.3" d="M1131.00,105L1142.00,116M1142.00,105L1131.00,116"/>
<circle cx="1196.90" cy="110.30" r="10.6" fill="#8bd3ec"/><path fill="none" stroke="#47545f" stroke-width="1.5" d="M1199.81,107.78A3.70,3.70 0 1 0 1199.81,112.82"/><circle cx="1204.20" cy="117.65" r="5.5" fill="#f2f2f2"/><circle cx="1204.20" cy="117.65" r="4.35" fill="#62b543"/>
<path stroke="#b4b4b4" stroke-width="1.3" d="M1308.00,105L1319.00,116M1319.00,105L1308.00,116"/>
<circle cx="1373.90" cy="110.30" r="10.6" fill="#8bd3ec"/><path fill="none" stroke="#47545f" stroke-width="1.5" d="M1376.81,107.78A3.70,3.70 0 1 0 1376.81,112.82"/><circle cx="1381.20" cy="117.65" r="5.5" fill="#f2f2f2"/><circle cx="1381.20" cy="117.65" r="4.35" fill="#62b543"/>
<path stroke="#b4b4b4" stroke-width="1.3" d="M1485.00,105L1496.00,116M1496.00,105L1485.00,116"/>
<rect x="800.6" y="135.5" width="1760" height="1.0" fill="#d2d0ce"/>
<rect x="611.2" y="132.9" width="189.4" height="4.2" fill="#3d81c5"/>
<rect x="611.2" y="136.5" width="1948.8" height="2.3" fill="#86aed8"/>
<rect x="611.2" y="1461.9" width="1948.8" height="1.4" fill="#86aed8"/>
<rect x="611.2" y="136.5" width="1.75" height="1326.8" fill="#86aed8"/>
<rect x="2558.1" y="136.5" width="1.9" height="1326.8" fill="#86aed8"/>
<rect x="611.2" y="132.9" width="189.4" height="4.2" fill="#3d81c5"/>
<rect x="1967.0" y="1111.0" width="1.0" height="25" fill="#f2101c"/><rect x="1969.1" y="1111.0" width="1.0" height="25" fill="#f2101c"/>
<rect x="611.2" y="1463.3" width="1949" height="1.6" fill="#cbcac9"/>
<rect x="611.2" y="1463.6" width="72.3" height="4.3" fill="#3d81c5"/>
<rect x="1047.6" y="1477.86" width="18.78" height="19.04" rx="3.4" fill="#fff" stroke="#adadad" stroke-width="1.6"/>
<circle cx="1272.0" cy="1524.2" r="2.1" fill="#b6b6b6"/>
<circle cx="1279.6" cy="1524.2" r="2.1" fill="#b6b6b6"/>
<circle cx="1287.2" cy="1524.2" r="2.1" fill="#b6b6b6"/>
<circle cx="1578.0" cy="1516.8" r="2.1" fill="#b6b6b6"/>
<circle cx="1585.6" cy="1516.8" r="2.1" fill="#b6b6b6"/>
<circle cx="1593.2" cy="1516.8" r="2.1" fill="#b6b6b6"/></svg>
</body></html>
